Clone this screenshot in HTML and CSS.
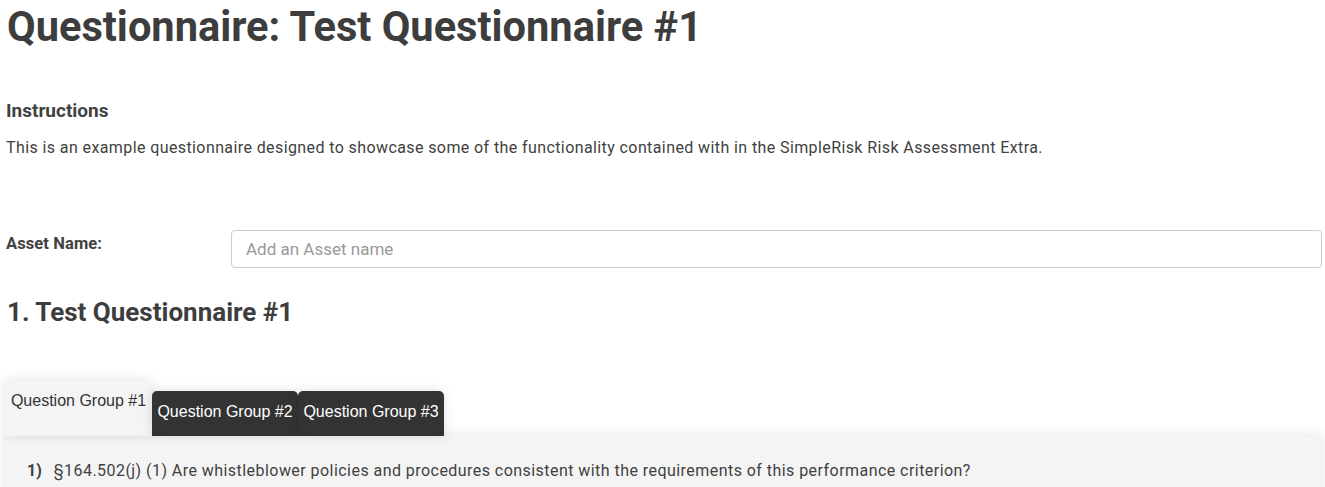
FILE: index.html
```html
<!DOCTYPE html>
<html>
<head>
<meta charset="utf-8">
<link rel="stylesheet" href="styles.css">
</head>
<body>
<div class="page">
  <h1 class="title">Questionnaire: Test Questionnaire #1</h1>
  <h4 class="instr-head">Instructions</h4>
  <p class="instr-text">This is an example questionnaire designed to showcase some of the functionality contained with in the SimpleRisk Risk Assessment Extra.</p>
  <div class="asset-row">
    <label class="asset-label">Asset Name:</label>
    <input class="asset-input" type="text" placeholder="Add an Asset name">
  </div>
  <h2 class="section-title">1. Test Questionnaire #1</h2>
  <div class="tabs">
    <div class="tab tab-active">Question Group #1</div>
    <div class="tab tab-dark">Question Group #2</div>
    <div class="tab tab-dark">Question Group #3</div>
  </div>
  <div class="panel">
    <div class="question"><span class="qnum">1)</span><span class="qtext">§164.502(j) (1) Are whistleblower policies and procedures consistent with the requirements of this performance criterion?</span></div>
  </div>
</div>
</body>
</html>
```
FILE: styles.css
```css
html, body {
  margin: 0;
  padding: 0;
  background: #fff;
}
body {
  font-family: Roboto, "Liberation Sans", sans-serif;
  color: #414141;
  overflow: hidden;
}
.page {
  padding: 0 3px 0 5px;
}
.title {
  margin: 0;
  padding: 3px 0 0 2px;
  font-size: 41.6px;
  line-height: 48px;
  font-weight: 700;
  color: #3d3d3d;
}
.instr-head {
  margin: 50px 0 0 1px;
  font-size: 19px;
  line-height: 20px;
  font-weight: 700;
}
.instr-text {
  margin: 16px 0 0 1px;
  font-size: 16px;
  letter-spacing: 0.4px;
  line-height: 22px;
}
.asset-row {
  display: flex;
  align-items: flex-start;
  margin-top: 71px;
}
.asset-label {
  width: 225px;
  padding: 4px 0 0 1px;
  font-size: 16.5px;
  letter-spacing: 0.1px;
  font-weight: 700;
  line-height: 20px;
}
.asset-input {
  flex: 1;
  height: 38px;
  box-sizing: border-box;
  border: 1px solid #ccc;
  border-radius: 4px;
  padding: 0 14px;
  font-family: Roboto, "Liberation Sans", sans-serif;
  font-size: 17px;
  color: #555;
  outline: none;
}
.asset-input::placeholder {
  color: #999;
}
.section-title {
  margin: 27px 0 0 2px;
  font-size: 26px;
  line-height: 34px;
  font-weight: 700;
  color: #3d3d3d;
}
.tabs {
  display: flex;
  align-items: flex-end;
  margin-top: 51px;
}
.tab {
  font-family: "Liberation Sans", Arial, sans-serif;
  font-size: 16px;
  box-sizing: border-box;
  width: 146px;
  text-align: center;
  border-radius: 5px 5px 0 0;
  box-shadow: 0 0 12px rgba(0,0,0,0.12);
}
.tab-active {
  width: 147px;
  height: 56px;
  background: #f4f4f4;
  color: #333;
  padding-top: 12px;
  border-top-left-radius: 0;
}
.tab-dark {
  height: 45px;
  background: #333;
  color: #fff;
  padding-top: 12px;
}
.panel {
  width: 1317px;
  background: #f4f4f4;
  box-shadow: 0 0 12px rgba(0,0,0,0.12);
  padding: 24px 0 20px 22px;
  box-sizing: border-box;
}
.question {
  font-size: 16px;
  letter-spacing: 0.45px;
  line-height: 22px;
}
.qnum {
  font-weight: 700;
  margin-right: 12px;
  letter-spacing: 0;
}
```
